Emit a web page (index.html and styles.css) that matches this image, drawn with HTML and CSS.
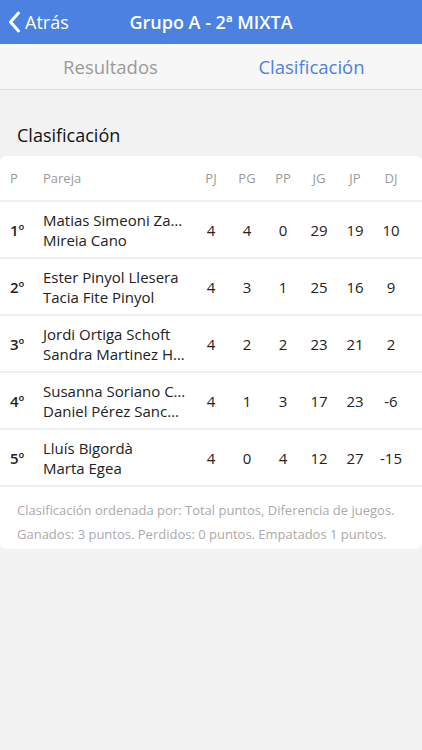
FILE: index.html
```html
<!DOCTYPE html>
<html lang="es">

<head>
    <meta charset="UTF-8">
    <meta name="viewport" content="width=device-width, initial-scale=1.0">
    <title>Grupo A - 2ª MIXTA</title>
    <link rel="stylesheet" href="styles.css">
</head>

<body>
    <div class="navBar">
        <div class="back">
            <svg width="13" height="22" viewBox="0 0 13 22">
                <path d="M10.5 2 L2.5 11 L10.5 20" fill="none" stroke="#fff" stroke-width="3"
                    stroke-linecap="round" stroke-linejoin="round" />
            </svg>
            <span>Atrás</span>
        </div>
        <div class="navTitle">Grupo A - 2ª MIXTA</div>
    </div>

    <div class="tabs">
        <div class="tab">Resultados</div>
        <div class="tab active">Clasificación</div>
    </div>

    <h2 class="sectionTitle">Clasificación</h2>

    <div class="card">
        <div class="row head">
            <div>P</div>
            <div>Pareja</div>
            <div class="num">PJ</div>
            <div class="num">PG</div>
            <div class="num">PP</div>
            <div class="num">JG</div>
            <div class="num">JP</div>
            <div class="num">DJ</div>
        </div>
        <div class="row">
            <div class="pos">1º</div>
            <div class="names"><span>Matias Simeoni Za…</span><span>Mireia Cano</span></div>
            <div class="num">4</div>
            <div class="num">4</div>
            <div class="num">0</div>
            <div class="num">29</div>
            <div class="num">19</div>
            <div class="num">10</div>
        </div>
        <div class="row">
            <div class="pos">2º</div>
            <div class="names"><span>Ester Pinyol Llesera</span><span>Tacia Fite Pinyol</span></div>
            <div class="num">4</div>
            <div class="num">3</div>
            <div class="num">1</div>
            <div class="num">25</div>
            <div class="num">16</div>
            <div class="num">9</div>
        </div>
        <div class="row">
            <div class="pos">3º</div>
            <div class="names"><span>Jordi Ortiga Schoft</span><span>Sandra Martinez H…</span></div>
            <div class="num">4</div>
            <div class="num">2</div>
            <div class="num">2</div>
            <div class="num">23</div>
            <div class="num">21</div>
            <div class="num">2</div>
        </div>
        <div class="row">
            <div class="pos">4º</div>
            <div class="names"><span>Susanna Soriano C…</span><span>Daniel Pérez Sanc…</span></div>
            <div class="num">4</div>
            <div class="num">1</div>
            <div class="num">3</div>
            <div class="num">17</div>
            <div class="num">23</div>
            <div class="num">-6</div>
        </div>
        <div class="row">
            <div class="pos">5º</div>
            <div class="names"><span>Lluís Bigordà</span><span>Marta Egea</span></div>
            <div class="num">4</div>
            <div class="num">0</div>
            <div class="num">4</div>
            <div class="num">12</div>
            <div class="num">27</div>
            <div class="num">-15</div>
        </div>
        <div class="notes">
            <p>Clasificación ordenada por: Total puntos, Diferencia de juegos.</p>
            <p>Ganados: 3 puntos. Perdidos: 0 puntos. Empatados 1 puntos.</p>
        </div>
    </div>
</body>

</html>
```

FILE: styles.css
```css
body {
    font-family: 'Open Sans', sans-serif;
    background-color: #f2f2f2;
    margin: 0;
    padding: 0;
    width: 422px;
    height: 750px;
    color: #222;
}

.navBar {
    background-color: #4b82e1;
    height: 44px;
    display: flex;
    align-items: center;
    justify-content: center;
    position: relative;
    color: #fff;
}

.back {
    position: absolute;
    left: 8px;
    top: 0;
    height: 44px;
    display: flex;
    align-items: center;
    gap: 4px;
    font-size: 18px;
}

.navTitle {
    font-size: 18px;
    font-weight: 600;
}

.tabs {
    display: flex;
    height: 45px;
    padding: 0 10px;
    background-color: #f7f7f7;
    border-bottom: 1px solid #dcdcdc;
}

.tab {
    flex: 1;
    display: flex;
    align-items: center;
    justify-content: center;
    font-size: 18.5px;
    color: #9a9a9a;
}

.tab.active {
    color: #4b82e1;
}

.sectionTitle {
    margin: 0;
    padding: 33px 17px 0;
    height: 33px;
    font-size: 18px;
    font-weight: 400;
    color: #111;
}

.card {
    background-color: #fff;
    border-radius: 6px;
}

.row {
    display: grid;
    grid-template-columns: 33px 150px repeat(6, 36px);
    padding: 0 13px 0 10px;
    align-items: center;
    height: 55px;
    border-bottom: 2px solid #efefef;
    font-size: 15px;
}

.row.head {
    height: 44px;
    font-size: 13px;
    color: #9a9a9a;
}

.num {
    text-align: center;
}

.pos {
    font-weight: 600;
}

.names {
    display: flex;
    flex-direction: column;
    line-height: 20px;
    white-space: nowrap;
}

.notes {
    padding: 11px 17px 3px;
}

.notes p {
    margin: 0;
    font-size: 13px;
    line-height: 24px;
    color: #aaa;
    white-space: nowrap;
}
```
